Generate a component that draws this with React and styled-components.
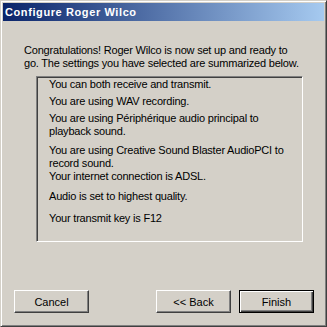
import React from 'react';
import styled, { createGlobalStyle } from 'styled-components';

const GlobalStyle = createGlobalStyle`
  html, body {
    margin: 0;
    padding: 0;
    background: #d4d0c8;
  }
`;

const XWindow = styled.div`
  box-sizing: border-box;
  width: 327px;
  height: 327px;
  display: flex;
  flex-direction: column;
  background: #d4d0c8;
  border-style: solid;
  border-width: 1px;
  border-color: #d4d0c8 #404040 #404040 #d4d0c8;
  box-shadow: inset 1px 1px 0 #ffffff, inset -1px -1px 0 #808080;
  padding: 2px;
  font-family: "Liberation Sans", Arial, sans-serif;
  font-size: 11px;
  line-height: 13px;
  letter-spacing: -0.2px;
  color: #000;
`;

const XTitleBar = styled.div`
  height: 18px;
  display: flex;
  align-items: center;
  padding-left: 2px;
  background: linear-gradient(to right, #0a246a, #a6caf0);
  color: #fff;
  font-weight: bold;
  font-size: 11px;
  letter-spacing: 0.6px;
`;

const XBody = styled.div`
  flex: 1;
  display: flex;
  flex-direction: column;
  padding: 23px 0 0 21px;
`;

const XIntro = styled.div`
  white-space: nowrap;
`;

const XSummary = styled.div`
  box-sizing: border-box;
  width: 267px;
  height: 166px;
  margin: 6px 0 0 12px;
  padding: 1px 0 0 12px;
  border-style: solid;
  border-width: 1px;
  border-color: #808080 #ffffff #ffffff #808080;
  box-shadow: inset 1px 1px 0 #404040, inset -1px -1px 0 #d4d0c8;
  display: flex;
  flex-direction: column;
`;

const XItem = styled.div`
  margin-top: ${props => props.gap}px;
  white-space: nowrap;
`;

const XButtons = styled.div`
  display: flex;
  margin: 48px 0 0 -10px;
`;

const XButton = styled.button`
  box-sizing: border-box;
  width: 75px;
  height: 23px;
  padding: 0;
  margin-left: ${props => props.offset || 0}px;
  background: #d4d0c8;
  font-family: "Liberation Sans", Arial, sans-serif;
  font-size: 11px;
  color: #000;
  border-style: solid;
  border-width: 1px;
  border-color: ${props => props.primary ? '#000000' : '#ffffff #404040 #404040 #ffffff'};
  box-shadow: ${props => props.primary
    ? 'inset 1px 1px 0 #ffffff, inset -1px -1px 0 #404040, inset -2px -2px 0 #808080'
    : 'inset -1px -1px 0 #808080'};
  display: flex;
  align-items: center;
  justify-content: center;
`;

const items = [
  { gap: 0, lines: ['You can both receive and transmit.'] },
  { gap: 4, lines: ['You are using WAV recording.'] },
  { gap: 4, lines: ['You are using Périphérique audio principal to', 'playback sound.'] },
  { gap: 6, lines: ['You are using Creative Sound Blaster AudioPCI to', 'record sound.'] },
  { gap: 0, lines: ['Your internet connection is ADSL.'] },
  { gap: 7, lines: ['Audio is set to highest quality.'] },
  { gap: 9, lines: ['Your transmit key is F12'] },
];

const App = () => {
  return (
    <>
      <GlobalStyle />
      <XWindow>
        <XTitleBar>Configure Roger Wilco</XTitleBar>
        <XBody>
          <XIntro>
            Congratulations! Roger Wilco is now set up and ready to<br />
            go. The settings you have selected are summarized below.
          </XIntro>
          <XSummary>
            {items.map((item, i) => (
              <XItem key={i} gap={item.gap}>
                {item.lines.map((line, j) => (
                  <div key={j}>{line}</div>
                ))}
              </XItem>
            ))}
          </XSummary>
          <XButtons>
            <XButton>Cancel</XButton>
            <XButton offset={67}>&lt;&lt; Back</XButton>
            <XButton offset={8} primary>Finish</XButton>
          </XButtons>
        </XBody>
      </XWindow>
    </>
  );
};

export default App;
